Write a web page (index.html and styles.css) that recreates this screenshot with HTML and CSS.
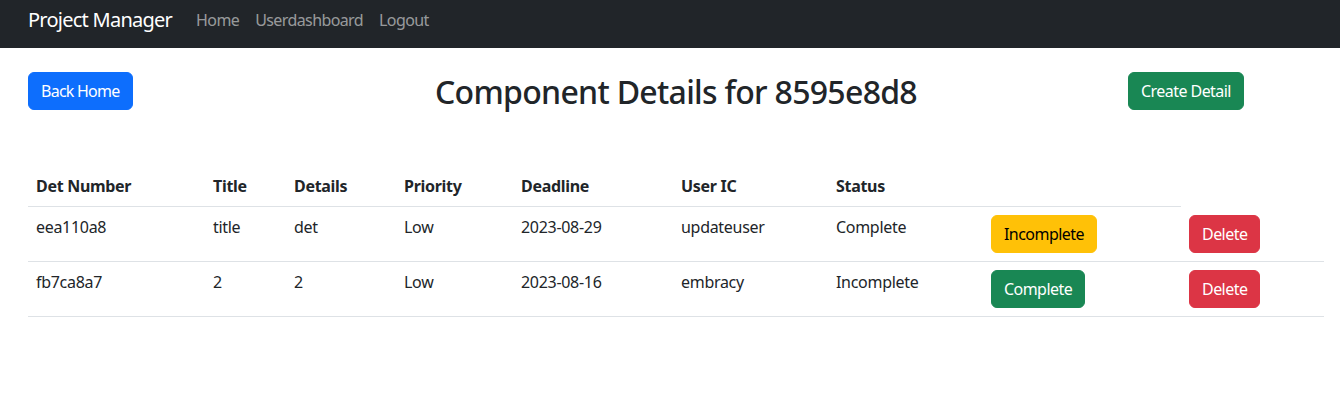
FILE: index.html
```html
<!DOCTYPE html>
<html lang="en">
<head>
<meta charset="utf-8">
<title>Component Details</title>
<link rel="stylesheet" href="styles.css">
</head>
<body>
<nav class="navbar">
  <a class="brand" href="#">Project Manager</a>
  <ul class="nav-links">
    <li><a href="#">Home</a></li>
    <li><a href="#">Userdashboard</a></li>
    <li><a href="#">Logout</a></li>
  </ul>
</nav>
<main class="container">
  <div class="top-row">
    <div class="col-left"><a class="btn btn-primary" href="#">Back Home</a></div>
    <h2 class="title">Component Details for 8595e8d8</h2>
    <div class="col-right"><a class="btn btn-success" href="#">Create Detail</a></div>
  </div>
  <table class="table">
    <colgroup>
      <col class="c1"><col class="c2"><col class="c3"><col class="c4"><col class="c5"><col class="c6"><col class="c7"><col class="c8"><col class="c9">
    </colgroup>
    <thead>
      <tr>
        <th>Det Number</th><th>Title</th><th>Details</th><th>Priority</th><th>Deadline</th><th>User IC</th><th>Status</th><th></th>
      </tr>
    </thead>
    <tbody>
      <tr>
        <td>eea110a8</td><td>title</td><td>det</td><td>Low</td><td>2023-08-29</td><td>updateuser</td><td>Complete</td>
        <td><button class="btn btn-warning">Incomplete</button></td>
        <td><button class="btn btn-danger">Delete</button></td>
      </tr>
      <tr>
        <td>fb7ca8a7</td><td>2</td><td>2</td><td>Low</td><td>2023-08-16</td><td>embracy</td><td>Incomplete</td>
        <td><button class="btn btn-success">Complete</button></td>
        <td><button class="btn btn-danger">Delete</button></td>
      </tr>
    </tbody>
  </table>
</main>
</body>
</html>
```

FILE: styles.css
```css
* { box-sizing: border-box; }
body {
  margin: 0;
  font-family: "Noto Sans", "Open Sans", sans-serif;
  font-size: 16px;
  line-height: 1.5;
  color: #212529;
  background: #fff;
}
.navbar {
  height: 48px;
  background: #212529;
  display: flex;
  align-items: flex-start;
  padding: 5px 28px 0;
}
.brand {
  color: #fff;
  font-size: 20px;
  line-height: 30px;
  text-decoration: none;
  margin-right: 16px;
  letter-spacing: -0.75px;
}
.nav-links {
  display: flex;
  list-style: none;
  margin: 0;
  padding: 0;
}
.nav-links a {
  display: block;
  padding: 3px 8px;
  color: rgba(255,255,255,.55);
  text-decoration: none;
  letter-spacing: -0.6px;
}
.container {
  padding: 24px 16px 0 28px;
}
.top-row {
  display: grid;
  grid-template-columns: 216px 1fr 216px;
  align-items: start;
}
.col-right { padding-left: 20px; }
.title {
  margin: 0 0 8px;
  font-size: 32px;
  font-weight: 500;
  line-height: 1.2;
  text-align: center;
  padding-top: 1px;
  letter-spacing: -0.7px;
}
.btn {
  display: inline-block;
  padding: 6px 12px;
  font-family: inherit;
  font-size: 16px;
  line-height: 24px;
  border: 1px solid transparent;
  border-radius: 6px;
  text-decoration: none;
  cursor: pointer;
  letter-spacing: -0.55px;
}
.btn-primary { background: #0d6efd; border-color: #0d6efd; color: #fff; letter-spacing: -0.75px; }
.btn-success { background: #198754; border-color: #198754; color: #fff; }
.btn-warning { background: #ffc107; border-color: #ffc107; color: #000; }
.btn-danger { background: #dc3545; border-color: #dc3545; color: #fff; }
.table {
  width: 1296px;
  margin-top: 47px;
  border-collapse: collapse;
  table-layout: fixed;
  vertical-align: top;
}
.c1 { width: 177px; } .c2 { width: 81px; } .c3 { width: 110px; }
.c4 { width: 117px; } .c5 { width: 160px; } .c6 { width: 155px; }
.c7 { width: 155px; } .c8 { width: 198px; } .c9 { width: 143px; }
.table th, .table td {
  padding: 8px;
  border-bottom: 1px solid #dee2e6;
  text-align: left;
  vertical-align: top;
  letter-spacing: -0.3px;
}
.table th { font-weight: 700; }
```
